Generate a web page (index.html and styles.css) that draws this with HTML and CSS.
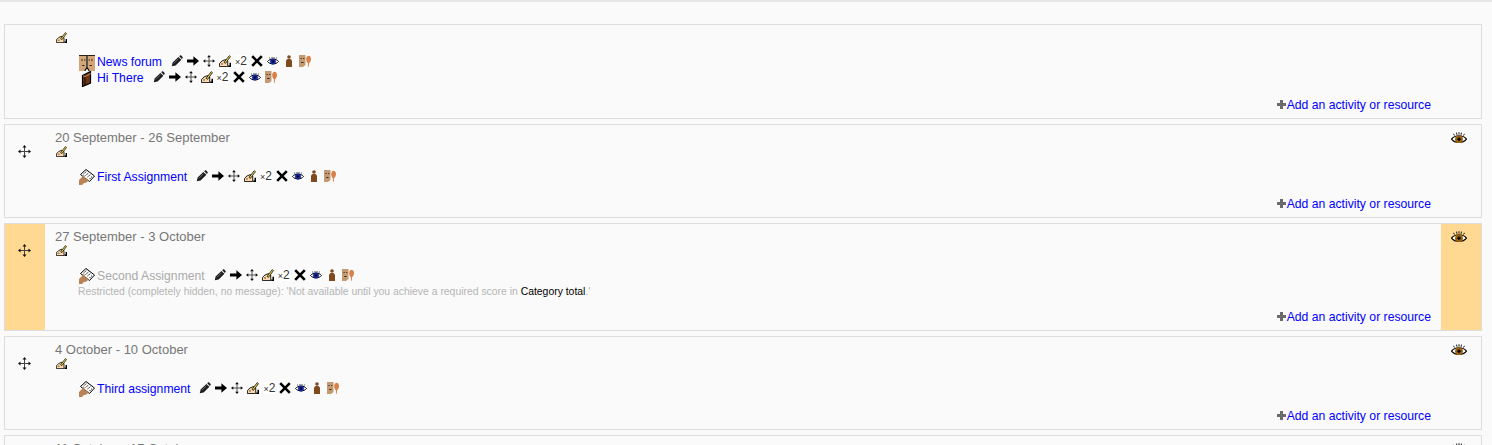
FILE: index.html
```html
<!DOCTYPE html>
<html lang="en">
<head>
  <meta charset="UTF-8">
  <title>Course sections</title>
  <link rel="stylesheet" href="styles.css">
</head>
<body>

  <!-- icon sprites -->
  <svg class="sprites" xmlns="http://www.w3.org/2000/svg">
    <symbol id="i-hand" viewBox="0 0 11 11">
      <path d="M.4 10.600V7.800L2.800 5.400 6 4.200l2 1.300v5.100z" fill="#fbd9ac" stroke="#000" stroke-width=".8"/>
      <path d="M4.600 6.800L9.400.6l1.100.9L6 7.600z" fill="#f4d848" stroke="#000" stroke-width=".7"/>
      <path d="M8.400 11H11V7H9.600v2.600H8.400z" fill="#000"/>
      <path d="M1.800 8.200h1.800" stroke="#000" stroke-width=".6"/>
    </symbol>
    <symbol id="i-pencil" viewBox="0 0 12 12">
      <path d="M.8 11.200l.8-3.600L7.400 2l3 2.800-5.800 5.600zM8.200 1.200l.8-.7c.4-.3.9-.3 1.200 0l1.400 1.400c.3.3.3.8 0 1.200l-.7.8z" fill="#1c1c1c"/>
      <path d="M2.800 8.400l4.800-4.800" stroke="#888" stroke-width=".7"/>
    </symbol>
    <symbol id="i-arrow" viewBox="0 0 12 12">
      <path d="M0 4.400h6.400V1.200L12 6l-5.600 4.800V7.600H0z" fill="#000"/>
    </symbol>
    <symbol id="i-move" viewBox="0 0 13 13">
      <path d="M6.500 1v11M1 6.500h11" stroke="#444" stroke-width="1" fill="none"/>
      <path d="M6.500 0l2 2.500h-4zM6.500 13l2-2.500h-4zM0 6.500l2.500-2v4zM13 6.500l-2.500-2v4z" fill="#111"/>
    </symbol>
    <symbol id="i-delete" viewBox="0 0 12 12">
      <path d="M1.200 1.200l9.600 9.600M10.800 1.200l-9.600 9.600" stroke="#000" stroke-width="2.600"/>
    </symbol>
    <symbol id="i-eye" viewBox="0 0 12 9">
      <path d="M.5 5C3 1.800 9 1.800 11.500 5 9 8.200 3 8.200.5 5z" fill="#fff" stroke="#000" stroke-width="1"/>
      <circle cx="6" cy="5" r="2.900" fill="#14249a"/>
      <circle cx="6" cy="5" r="1" fill="#000"/>
      <path d="M3 2.200L2.400 1M5 1.800V.5M7 1.800V.5M9 2.200L9.600 1" stroke="#000" stroke-width=".7"/>
    </symbol>
    <symbol id="i-eye-big" viewBox="0 0 16 12">
      <path d="M.5 7.200C4 2.600 12 2.600 15.500 7.200 12 11.600 4 11.600 .5 7.200z" fill="#fff" stroke="#000" stroke-width="1.200"/>
      <circle cx="8" cy="7.200" r="3.900" fill="#96600f"/>
      <path d="M6.300 7.200h3.400M8 5.500v3.400" stroke="#000" stroke-width="1.400"/>
      <path d="M3.500 3.500L2.500 1.800M6 2.800L5.500.6M8 2.600V.2M10 2.800l.5-2.200M12.500 3.500l1-1.700" stroke="#000" stroke-width=".9"/>
    </symbol>
    <symbol id="i-person" viewBox="0 0 8 12">
      <circle cx="4" cy="2" r="1.800" fill="#7f4a1f"/>
      <path d="M1 12V5.500L2.500 4h3L7 5.500V12z" fill="#7f4a1f"/>
    </symbol>
    <symbol id="i-group" viewBox="0 0 12 12">
      <path d="M0 0h6.500v10L4 12H0z" fill="#c39a72"/>
      <path d="M1.500 3.500h1.200M4.200 3.500h1.200M2.200 7.500h2.400" stroke="#2e2014" stroke-width=".9"/>
      <path d="M9.500 .8c1.600 0 2.500 1.500 2.500 3.400S10.800 7.800 10 8l-.2 3.800H9L8.800 8C7.800 7.500 7.200 5.800 7.200 4.200 7.200 2.300 8.200.8 9.500.8z" fill="#d8824a"/>
    </symbol>
    <symbol id="i-forum" viewBox="0 0 16 16">
      <path d="M0 0h7.500v12.500L6 16H0zM8.500 0H16v16h-6l-1.500-3.500z" fill="#d2a679"/>
      <path d="M2 5h2M5 5h1.500M9.500 5H11M12 5h2M3 10.500h2.500M10.500 10.500H13" stroke="#3a2816" stroke-width="1"/>
      <path d="M0 .5h16" stroke="#2e2014" stroke-width="1"/>
      <path d="M8 1v11.500M5.800 15.800L8 12.500l2.200 3.300" fill="#fff" stroke="#000" stroke-width="1.200"/>
    </symbol>
    <symbol id="i-book" viewBox="0 0 16 16">
      <path d="M3.500 4.500L11.500.5v11.500l-8 3.500z" fill="#6d3512" stroke="#000" stroke-width="1.200"/>
      <path d="M6 15V5.500" stroke="#000" stroke-width=".8"/>
      <path d="M4 4.800l2 .8L12 2.500" fill="none" stroke="#c9a070" stroke-width=".8"/>
    </symbol>
    <symbol id="i-assign" viewBox="0 0 16 16">
      <path d="M1.500 5.500L7 .5l8.500 6.500-5 5.500z" fill="#fff" stroke="#000" stroke-width="1"/>
      <path d="M4.500 5l3-2.500M6.500 6.500l3-2.500M8.500 8l3-2.500M10.500 10l2.500-2.500" stroke="#222" stroke-width="1" stroke-dasharray="1.500 .7"/>
      <path d="M0 16v-5L3.500 7.500 5 5.500l1.200 3.800L10 11l-2.500 2.500-2.500.5L3 16z" fill="#b98355"/>
    </symbol>
    <symbol id="i-plus" viewBox="0 0 9 9">
      <path d="M3 0h3v3h3v3H6v3H3V6H0V3h3z" fill="#6b6b6b"/>
    </symbol>
  </svg>

  <div class="topbar"></div>

  <ul class="sections">

    <li class="section">
      <div class="side"></div>
      <div class="content content-first">
        <div class="edit-summary"><svg class="ic-hand"><use href="#i-hand"/></svg></div>
        <ul class="activities">
          <li class="activity">
            <svg class="modicon"><use href="#i-forum"/></svg>
            <a class="modlink" href="#">News forum</a>
            <span class="actions">
              <svg class="act"><use href="#i-pencil"/></svg>
              <svg class="act"><use href="#i-arrow"/></svg>
              <svg class="act"><use href="#i-move"/></svg>
              <svg class="act"><use href="#i-hand"/></svg>
              <span class="act dup"><small>×</small>2</span>
              <svg class="act"><use href="#i-delete"/></svg>
              <svg class="act"><use href="#i-eye"/></svg>
              <svg class="act"><use href="#i-person"/></svg>
              <svg class="act"><use href="#i-group"/></svg>
            </span>
          </li>
          <li class="activity">
            <svg class="modicon"><use href="#i-book"/></svg>
            <a class="modlink" href="#">Hi There</a>
            <span class="actions">
              <svg class="act"><use href="#i-pencil"/></svg>
              <svg class="act"><use href="#i-arrow"/></svg>
              <svg class="act"><use href="#i-move"/></svg>
              <svg class="act"><use href="#i-hand"/></svg>
              <span class="act dup"><small>×</small>2</span>
              <svg class="act"><use href="#i-delete"/></svg>
              <svg class="act"><use href="#i-eye"/></svg>
              <svg class="act"><use href="#i-group"/></svg>
            </span>
          </li>
        </ul>
        <div class="add-row"><a class="add" href="#"><svg class="ic-plus"><use href="#i-plus"/></svg>Add an activity or resource</a></div>
      </div>
      <div class="side"></div>
    </li>

    <li class="section">
      <div class="side side-left"><svg class="ic-move"><use href="#i-move"/></svg></div>
      <div class="content">
        <h3 class="sectionname">20 September - 26 September</h3>
        <div class="edit-summary"><svg class="ic-hand"><use href="#i-hand"/></svg></div>
        <ul class="activities">
          <li class="activity">
            <svg class="modicon"><use href="#i-assign"/></svg>
            <a class="modlink" href="#">First Assignment</a>
            <span class="actions">
              <svg class="act"><use href="#i-pencil"/></svg>
              <svg class="act"><use href="#i-arrow"/></svg>
              <svg class="act"><use href="#i-move"/></svg>
              <svg class="act"><use href="#i-hand"/></svg>
              <span class="act dup"><small>×</small>2</span>
              <svg class="act"><use href="#i-delete"/></svg>
              <svg class="act"><use href="#i-eye"/></svg>
              <svg class="act"><use href="#i-person"/></svg>
              <svg class="act"><use href="#i-group"/></svg>
            </span>
          </li>
        </ul>
        <div class="add-row"><a class="add" href="#"><svg class="ic-plus"><use href="#i-plus"/></svg>Add an activity or resource</a></div>
      </div>
      <div class="side side-right"><svg class="ic-eye"><use href="#i-eye-big"/></svg></div>
    </li>

    <li class="section current">
      <div class="side side-left"><svg class="ic-move"><use href="#i-move"/></svg></div>
      <div class="content">
        <h3 class="sectionname">27 September - 3 October</h3>
        <div class="edit-summary"><svg class="ic-hand"><use href="#i-hand"/></svg></div>
        <ul class="activities">
          <li class="activity">
            <svg class="modicon"><use href="#i-assign"/></svg>
            <a class="modlink dimmed" href="#">Second Assignment</a>
            <span class="actions">
              <svg class="act"><use href="#i-pencil"/></svg>
              <svg class="act"><use href="#i-arrow"/></svg>
              <svg class="act"><use href="#i-move"/></svg>
              <svg class="act"><use href="#i-hand"/></svg>
              <span class="act dup"><small>×</small>2</span>
              <svg class="act"><use href="#i-delete"/></svg>
              <svg class="act"><use href="#i-eye"/></svg>
              <svg class="act"><use href="#i-person"/></svg>
              <svg class="act"><use href="#i-group"/></svg>
            </span>
          </li>
        </ul>
        <div class="availability">Restricted (completely hidden, no message): 'Not available until you achieve a required score in <b>Category total</b>.'</div>
        <div class="add-row"><a class="add" href="#"><svg class="ic-plus"><use href="#i-plus"/></svg>Add an activity or resource</a></div>
      </div>
      <div class="side side-right"><svg class="ic-eye"><use href="#i-eye-big"/></svg></div>
    </li>

    <li class="section">
      <div class="side side-left"><svg class="ic-move"><use href="#i-move"/></svg></div>
      <div class="content">
        <h3 class="sectionname">4 October - 10 October</h3>
        <div class="edit-summary"><svg class="ic-hand"><use href="#i-hand"/></svg></div>
        <ul class="activities">
          <li class="activity">
            <svg class="modicon"><use href="#i-assign"/></svg>
            <a class="modlink" href="#">Third assignment</a>
            <span class="actions">
              <svg class="act"><use href="#i-pencil"/></svg>
              <svg class="act"><use href="#i-arrow"/></svg>
              <svg class="act"><use href="#i-move"/></svg>
              <svg class="act"><use href="#i-hand"/></svg>
              <span class="act dup"><small>×</small>2</span>
              <svg class="act"><use href="#i-delete"/></svg>
              <svg class="act"><use href="#i-eye"/></svg>
              <svg class="act"><use href="#i-person"/></svg>
              <svg class="act"><use href="#i-group"/></svg>
            </span>
          </li>
        </ul>
        <div class="add-row"><a class="add" href="#"><svg class="ic-plus"><use href="#i-plus"/></svg>Add an activity or resource</a></div>
      </div>
      <div class="side side-right"><svg class="ic-eye"><use href="#i-eye-big"/></svg></div>
    </li>

    <li class="section">
      <div class="side side-left"><svg class="ic-move"><use href="#i-move"/></svg></div>
      <div class="content">
        <h3 class="sectionname">11 October - 17 October</h3>
      </div>
      <div class="side side-right"><svg class="ic-eye"><use href="#i-eye-big"/></svg></div>
    </li>

  </ul>

</body>
</html>
```

FILE: styles.css
```css
html, body {
  height: 445px;
  overflow: hidden;
}

body {
  margin: 0;
  background: #fafafa;
  font-family: "Liberation Sans", Arial, sans-serif;
  font-size: 12px;
  color: #333;
}

.sprites {
  display: none;
}

.topbar {
  height: 2px;
  background: #e6e6e6;
}

.sections {
  list-style: none;
  margin: 22px 10px 0 4px;
  padding: 0;
  display: flex;
  flex-direction: column;
  gap: 5px;
}

.section {
  display: flex;
  border: 1px solid #ddd;
  background: #fafafa;
}

.side {
  width: 40px;
  flex: none;
}

.side-left {
  display: flex;
  justify-content: center;
  padding: 20px 1px 0 0;
  box-sizing: border-box;
}

.side-right {
  display: flex;
  justify-content: flex-end;
  padding: 7px 14px 0 0;
  box-sizing: border-box;
}

.current .side {
  background: #ffd991;
}

.ic-move {
  width: 13px;
  height: 13px;
}

.ic-eye {
  width: 16px;
  height: 12px;
}

.content {
  flex: 1;
  padding: 5px 10px 0 10px;
  min-width: 0;
}

.content-first {
  padding-top: 7px;
}

.sectionname {
  margin: 0;
  font-size: 13px;
  font-weight: normal;
  line-height: 16px;
  color: #777;
}

.edit-summary {
  height: 13px;
  padding-left: 1px;
  display: flex;
  align-items: flex-start;
}

.ic-hand {
  width: 11px;
  height: 11px;
}

.activities {
  list-style: none;
  margin: 10px 0 0 0;
  padding: 0 0 0 24px;
}

.content-first .activities {
  margin-top: 9px;
}

.activity {
  display: flex;
  align-items: center;
  height: 16px;
}

.modicon {
  width: 16px;
  height: 16px;
  flex: none;
}

.content-first .modicon {
  margin-top: 2px;
}

.modlink {
  margin-left: 2px;
  color: #00f;
  text-decoration: none;
  font-size: 12.200px;
}

.modlink.dimmed {
  color: #aaa;
}

.actions {
  display: flex;
  align-items: center;
  margin-left: 9px;
  margin-bottom: 2px;
  gap: 4px;
}

.act {
  width: 12px;
  height: 12px;
  flex: none;
}

.dup {
  background: #fff;
  color: #333;
  font-size: 12px;
  line-height: 12px;
  white-space: nowrap;
}

.dup small {
  font-size: 9px;
}

.availability {
  margin: 2px 0 0 23px;
  font-size: 10.400px;
  line-height: 12px;
  color: #b5b5b5;
}

.availability b {
  font-weight: normal;
  color: #000;
}

.add-row {
  display: flex;
  justify-content: flex-end;
  margin-top: 12px;
  padding-bottom: 6px;
  line-height: 14px;
}

.add {
  color: #00f;
  text-decoration: none;
  font-size: 12.200px;
}

.ic-plus {
  width: 9px;
  height: 9px;
  margin-right: 1px;
}
```
